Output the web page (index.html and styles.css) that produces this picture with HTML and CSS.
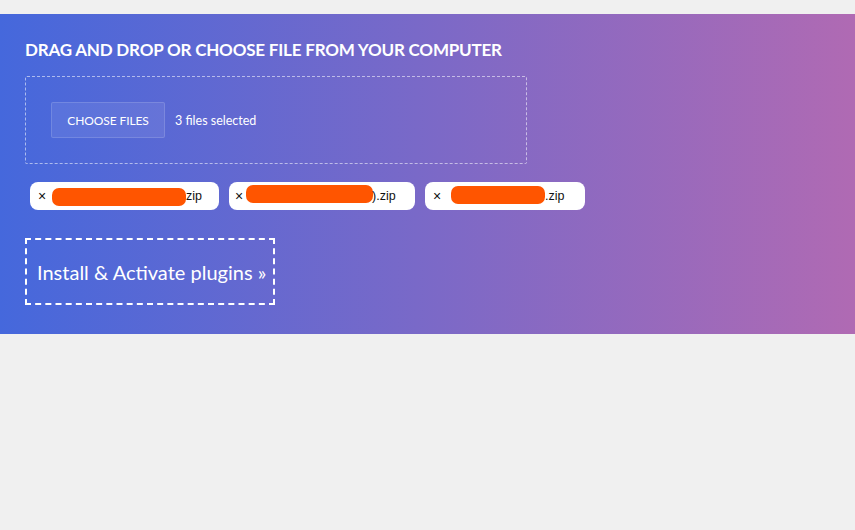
FILE: index.html
```html
<!DOCTYPE html>
<html>
<head>
<meta charset="utf-8">
<link rel="stylesheet" href="styles.css">
</head>
<body>
<section class="hero">
  <h2 class="title">DRAG AND DROP OR CHOOSE FILE FROM YOUR COMPUTER</h2>
  <div class="dropzone">
    <span class="choose-btn">CHOOSE FILES</span>
    <span class="selected">3 files selected</span>
  </div>
  <div class="chips">
    <div class="chip chip-1"><span class="x">×</span><span class="redact r1"></span><span class="name">zip</span></div>
    <div class="chip chip-2"><span class="x">×</span><span class="redact r2"></span><span class="name">).zip</span></div>
    <div class="chip chip-3"><span class="x">×</span><span class="redact r3"></span><span class="name">.zip</span></div>
  </div>
  <div class="install">Install &amp; Activate plugins »</div>
</section>
</body>
</html>
```
FILE: styles.css
```css
html, body {
  margin: 0;
  padding: 0;
  background: #f0f0f0;
}
body {
  padding-top: 14px;
  font-family: Lato, "Open Sans", sans-serif;
}
.hero {
  box-sizing: border-box;
  height: 320px;
  padding: 25px 25px 0 25px;
  background: linear-gradient(to right, #4568dc, #b06ab3);
  color: #fff;
}
.title {
  margin: 0;
  font-size: 17px;
  line-height: 22px;
  font-weight: 700;
  letter-spacing: -0.2px;
}
.dropzone {
  box-sizing: border-box;
  margin-top: 15px;
  width: 502px;
  height: 88px;
  border: 1px dashed rgba(255, 255, 255, 0.55);
  border-radius: 2px;
  padding: 0 25px;
  display: flex;
  align-items: center;
  gap: 10px;
}
.choose-btn {
  box-sizing: border-box;
  width: 114px;
  height: 36px;
  display: flex;
  align-items: center;
  justify-content: center;
  background: rgba(255, 255, 255, 0.08);
  border: 1px solid rgba(255, 255, 255, 0.14);
  border-radius: 2px;
  font-size: 12px;
  letter-spacing: -0.1px;
}
.selected {
  font-size: 12.5px;
}
.chips {
  display: flex;
  gap: 10px;
  margin: 18px 0 0 5px;
}
.chip {
  box-sizing: border-box;
  height: 28px;
  background: #fff;
  border-radius: 8px;
  display: flex;
  align-items: center;
  padding-left: 8px;
  color: #111;
  font-family: "DejaVu Sans", "Liberation Sans", sans-serif;
  font-size: 12px;
}
.chip-1 { width: 189px; }
.chip-2 { width: 186px; padding-left: 6px; }
.chip-3 { width: 160px; }
.x {
  font-family: "Liberation Sans", sans-serif;
  font-size: 14px;
  width: 10px;
}
.redact {
  display: block;
  background: #ff5500;
  height: 18px;
  border-radius: 7px;
}
.r1 { width: 134px; margin: 2px 0 0 4px; }
.r2 { width: 127px; margin: -4px -1px 0 1px; }
.r3 { width: 94px; margin: -2px 0 0 8px; }
.name {
  font-family: "Liberation Sans", sans-serif;
  font-size: 12.5px;
}
.install {
  box-sizing: border-box;
  margin-top: 28px;
  width: 250px;
  height: 67px;
  border: 2px dashed #fff;
  display: flex;
  align-items: center;
  padding-left: 10px;
  font-size: 20px;
  white-space: nowrap;
}
```
